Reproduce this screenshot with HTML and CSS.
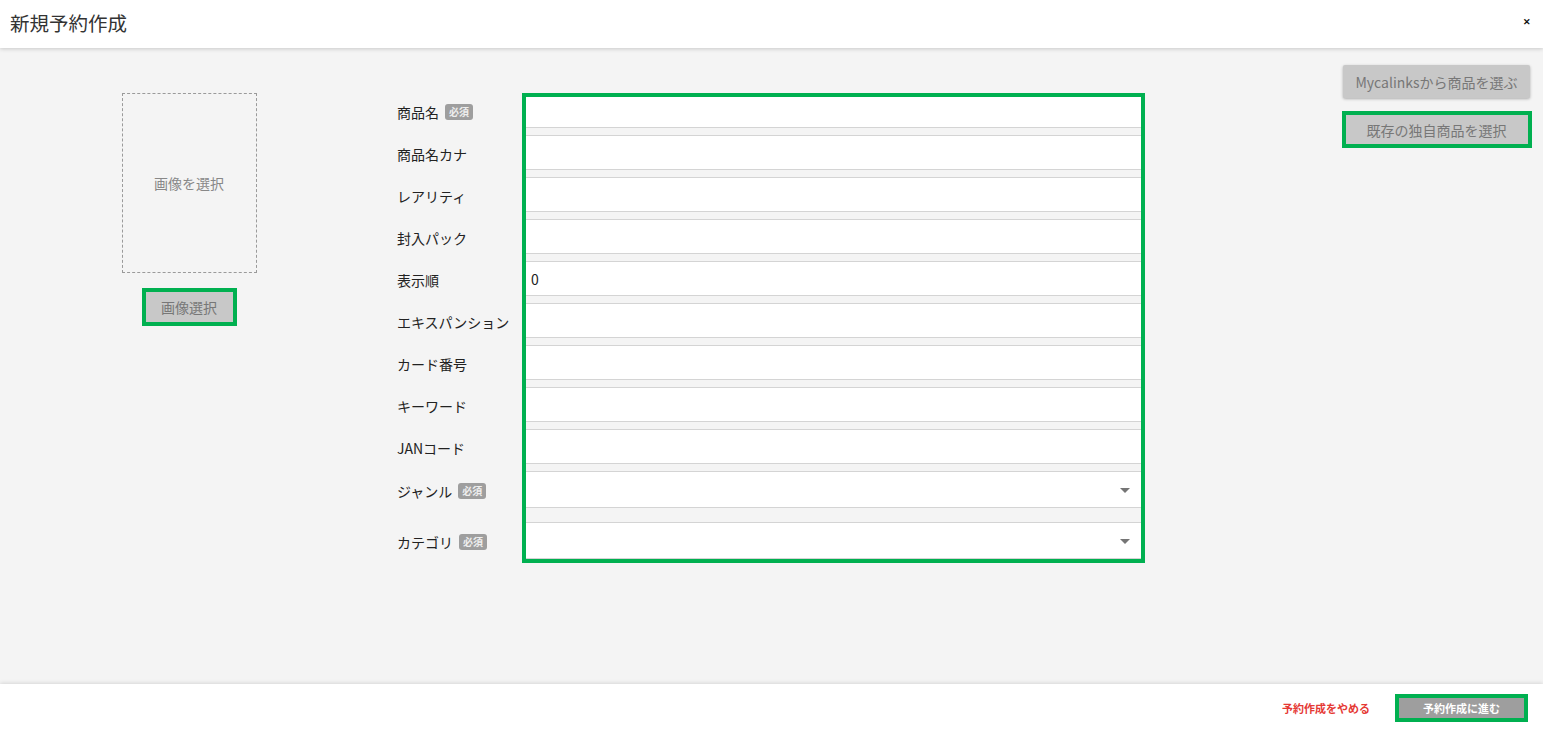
FILE: index.html
```html
<!DOCTYPE html>
<html lang="ja">

<head>
    <meta charset="UTF-8">
    <meta name="viewport" content="width=device-width, initial-scale=1.0">
    <title>新規予約作成</title>
    <link rel="stylesheet" href="styles.css">
</head>

<body>
    <div class="page">
        <!-- Header -->
        <header class="topbar">
            <h1 class="title">新規予約作成</h1>
            <button class="close" type="button">✕</button>
        </header>

        <main class="content">
            <!-- Image -->
            <section class="image-col">
                <div class="image-drop">画像を選択</div>
                <button class="btn marked" type="button">画像選択</button>
            </section>

            <!-- Form -->
            <form class="form">
                <div class="labels">
                    <div class="label">商品名 <span class="req">必須</span></div>
                    <div class="label">商品名カナ</div>
                    <div class="label">レアリティ</div>
                    <div class="label">封入パック</div>
                    <div class="label">表示順</div>
                    <div class="label">エキスパンション</div>
                    <div class="label">カード番号</div>
                    <div class="label">キーワード</div>
                    <div class="label">JANコード</div>
                    <div class="label label-select">ジャンル <span class="req">必須</span></div>
                    <div class="label label-select">カテゴリ <span class="req">必須</span></div>
                </div>

                <div class="fields">
                    <input class="field" type="text" name="name">
                    <input class="field" type="text" name="name_kana">
                    <input class="field" type="text" name="rarity">
                    <input class="field" type="text" name="pack">
                    <input class="field" type="number" name="order" value="0">
                    <input class="field" type="text" name="expansion">
                    <input class="field" type="text" name="card_no">
                    <input class="field" type="text" name="keyword">
                    <input class="field" type="text" name="jan">
                    <div class="field field-select">
                        <svg class="arrow" width="10" height="5" viewBox="0 0 10 5"><path d="M0 0h10L5 5z" fill="#757575"/></svg>
                    </div>
                    <div class="field field-select">
                        <svg class="arrow" width="10" height="5" viewBox="0 0 10 5"><path d="M0 0h10L5 5z" fill="#757575"/></svg>
                    </div>
                </div>
            </form>

            <!-- Right buttons -->
            <aside class="side">
                <button class="btn btn-raised" type="button">Mycalinksから商品を選ぶ</button>
                <button class="btn btn-own marked" type="button">既存の独自商品を選択</button>
            </aside>
        </main>

        <!-- Footer -->
        <footer class="footer">
            <button class="link-cancel" type="button">予約作成をやめる</button>
            <button class="btn-submit marked" type="button">予約作成に進む</button>
        </footer>
    </div>
</body>

</html>
```

FILE: styles.css
```css
* {
    box-sizing: border-box;
}

body {
    margin: 0;
    font-family: "Noto Sans CJK JP", "Noto Sans", sans-serif;
    color: #222;
}

.page {
    display: flex;
    flex-direction: column;
    height: 100vh;
    background: #f4f4f4;
}

/* Header */
.topbar {
    position: relative;
    z-index: 1;
    display: flex;
    align-items: center;
    justify-content: space-between;
    height: 48px;
    padding: 0 12px 4px 10px;
    background: #fff;
    box-shadow: 0 1px 4px rgba(0, 0, 0, 0.18);
}

.title {
    margin: 0;
    font-size: 19.5px;
    font-weight: 400;
    color: #333;
}

.close {
    border: none;
    background: none;
    padding: 0;
    font-size: 9px;
    font-weight: 700;
    color: #111;
    cursor: pointer;
}

/* Content */
.content {
    flex: 1;
    display: flex;
    align-items: flex-start;
}

.image-col {
    width: 378px;
    margin-top: 45px;
    display: flex;
    flex-direction: column;
    align-items: center;
}

.image-drop {
    width: 135px;
    height: 180px;
    display: flex;
    align-items: center;
    justify-content: center;
    border: 1px dashed #9a9a9a;
    font-size: 14px;
    color: #888;
}

.btn {
    border: none;
    border-radius: 2px;
    background: #c8c8c8;
    color: #777;
    font-family: inherit;
    font-size: 14px;
    cursor: pointer;
}

.image-col .btn {
    margin-top: 19px;
    width: 87px;
    height: 30px;
}

.marked {
    border-radius: 0;
    outline: 4px solid #00b050;
}

/* Form */
.form {
    display: flex;
    align-items: flex-start;
    margin-top: 45px;
    margin-left: 19px;
}

.labels {
    width: 125px;
}

.label {
    display: flex;
    align-items: center;
    height: 35px;
    margin-bottom: 7px;
    padding-top: 3px;
    font-size: 14px;
    white-space: nowrap;
}

.label-select {
    height: 37px;
    margin-bottom: 14px;
}

.req {
    display: inline-block;
    margin-left: 6px;
    padding: 2px 4px;
    border-radius: 3px;
    background: #9e9e9e;
    color: #eee;
    font-size: 10px;
    font-weight: 700;
    line-height: 12px;
}

.fields {
    position: relative;
    width: 623px;
    padding-bottom: 4px;
}

/* green frame drawn over the fields */
.fields::after {
    content: "";
    position: absolute;
    inset: 0;
    border: 4px solid #00b050;
    pointer-events: none;
}

.field {
    display: block;
    width: 100%;
    height: 35px;
    margin: 0 0 7px;
    padding: 0 9px;
    border: none;
    border-top: 1px solid #d4d4d4;
    border-bottom: 1px solid #d4d4d4;
    background: #fff;
    font-family: inherit;
    font-size: 14px;
    color: #222;
    outline: none;
    -moz-appearance: textfield;
}

.field::-webkit-inner-spin-button,
.field::-webkit-outer-spin-button {
    -webkit-appearance: none;
    margin: 0;
}

.field-select {
    position: relative;
    height: 37px;
    margin-bottom: 14px;
}

.field-select:last-child {
    margin-bottom: 0;
}

.arrow {
    position: absolute;
    right: 15px;
    top: 16px;
}

/* Right side */
.side {
    margin-left: auto;
    margin-right: 13px;
    margin-top: 17px;
    width: 187px;
    display: flex;
    flex-direction: column;
    align-items: center;
}

.btn-raised {
    width: 187px;
    height: 33px;
    box-shadow: 0 1px 3px rgba(0, 0, 0, 0.3);
}

.btn-own {
    margin-top: 17px;
    width: 182px;
    height: 29px;
}

/* Footer */
.footer {
    display: flex;
    align-items: center;
    justify-content: flex-end;
    height: 48px;
    padding-right: 19px;
    background: #fff;
    box-shadow: 0 -1px 4px rgba(0, 0, 0, 0.12);
}

.link-cancel {
    margin-right: 29px;
    border: none;
    background: none;
    padding: 0;
    font-family: inherit;
    font-size: 11px;
    font-weight: 700;
    color: #e53935;
    cursor: pointer;
}

.btn-submit {
    width: 125px;
    height: 20px;
    border: none;
    background: #9e9e9e;
    color: #fff;
    font-family: inherit;
    font-size: 11px;
    font-weight: 700;
    cursor: pointer;
}
```
